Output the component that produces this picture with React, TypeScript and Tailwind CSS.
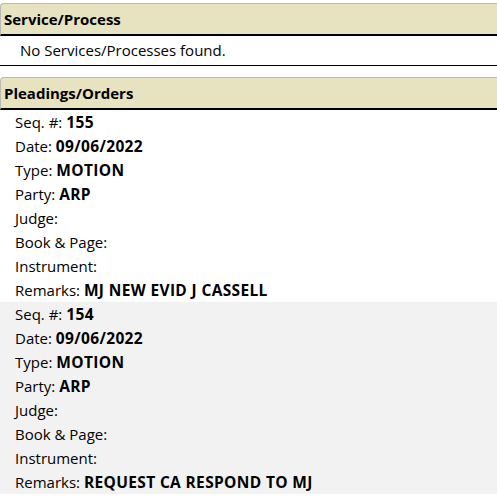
const records = [
  {
    seq: '155',
    date: '09/06/2022',
    type: 'MOTION',
    party: 'ARP',
    remarks: 'MJ NEW EVID J CASSELL',
  },
  {
    seq: '154',
    date: '09/06/2022',
    type: 'MOTION',
    party: 'ARP',
    remarks: 'REQUEST CA RESPOND TO MJ',
  },
]

function Header({ title }: { title: string }) {
  return (
    <div className="h-[33px] flex items-center pl-[3px] bg-[#e7e3c1] border-t border-l border-[#b9b9b9] border-b-2 border-b-black rounded-tl-[4px] font-bold text-[15px] text-black">
      {title}
    </div>
  )
}

function Line({ label, value }: { label: string; value?: string }) {
  return (
    <div className="h-6 leading-6 pl-[15px] whitespace-pre">
      {label}: {value && <b className="font-bold text-[15.5px] tracking-[0.35px]">{value}</b>}
    </div>
  )
}

export default function App() {
  return (
    <div
      className="w-[497px] h-[497px] overflow-hidden bg-white text-[15px] text-black pt-[3px]"
      style={{ fontFamily: '"Open Sans", "Noto Sans", sans-serif' }}
    >
      <Header title="Service/Process" />
      <div className="h-[30px] flex items-center pl-[20px] border-b border-black">
        No Services/Processes found.
      </div>

      <div className="mt-[11px]">
        <Header title="Pleadings/Orders" />
        {records.map((r, i) => (
          <div key={r.seq} className={i % 2 === 1 ? 'bg-[#f2f2f2]' : 'bg-white'}>
            <Line label="Seq. #" value={r.seq} />
            <Line label="Date" value={r.date} />
            <Line label="Type" value={r.type} />
            <Line label="Party" value={r.party} />
            <Line label="Judge" />
            <Line label="Book & Page" />
            <Line label="Instrument" />
            <Line label="Remarks" value={r.remarks} />
          </div>
        ))}
      </div>
    </div>
  )
}
